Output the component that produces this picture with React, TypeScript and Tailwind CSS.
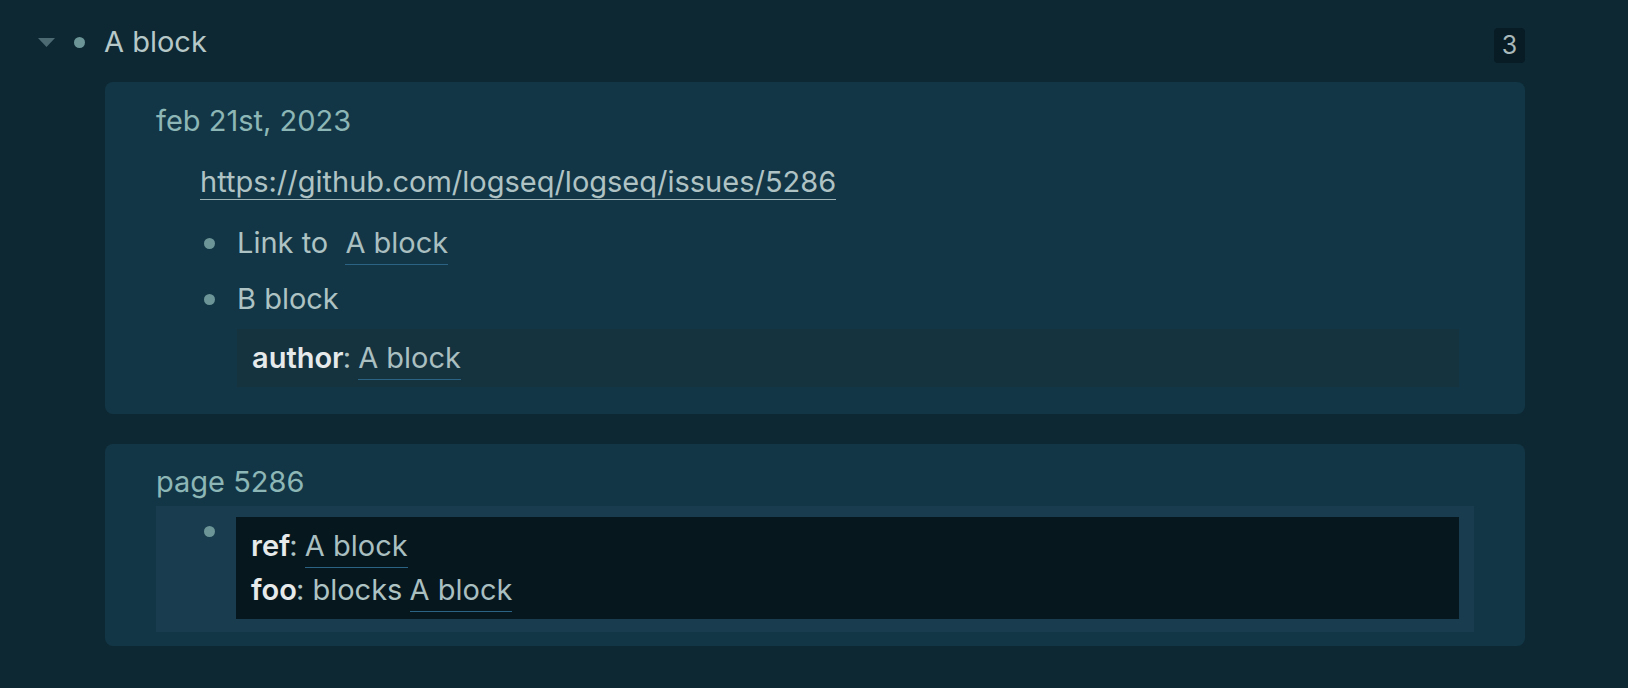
import React from 'react';

const font = { fontFamily: 'Inter, "Noto Sans", sans-serif' };

const Dot = () => <span className="block w-[11px] h-[11px] rounded-full bg-[#6b9597]" />;

const Ref: React.FC<{ children: React.ReactNode }> = ({ children }) => (
  <span className="text-[#a9bfc0] border-b border-[#2b6384] pb-[4px]">{children}</span>
);

export default function App() {
  return (
    <div className="w-[1628px] h-[688px] bg-[#0d2833] text-[29px] leading-[44px] text-[#aec3c3] overflow-hidden" style={font}>
      {/* Top block row */}
      <div className="flex items-center h-[44px] mt-[20px] pr-[103px]">
        <svg width="17" height="9" viewBox="0 0 17 9" className="ml-[38px]">
          <polygon points="0,0 17,0 8.5,9" fill="#4b6a72" />
        </svg>
        <span className="ml-[19px]">
          <Dot />
        </span>
        <span className="ml-[19px] text-[29px] text-[#b7c8c8]">A block</span>
        <span className="ml-auto mt-[6px] w-[31px] h-[35px] rounded-[4px] bg-[#071c24] text-[#a9b8ba] text-[25px] leading-[35px] text-center">
          3
        </span>
      </div>

      {/* Reference card 1 */}
      <div className="ml-[105px] mr-[103px] mt-[18px] rounded-[8px] bg-[#123646] pt-[17px] pb-[27px] pl-[51px] pr-[51px]">
        <div className="text-[#8db6b6]">feb 21st, 2023</div>
        <div className="mt-[17px] pl-[44px]">
          <span className="border-b border-[#9fb4b7] text-[#b0c3c4]">https://github.com/logseq/logseq/issues/5286</span>
        </div>
        <div className="mt-[17px] flex h-[56px] items-start pl-[1px]">
          <div className="w-[80px] flex justify-end pr-[22px] pt-[17px]">
            <Dot />
          </div>
          <div>
            Link to <span className="ml-[9px]"><Ref>A block</Ref></span>
          </div>
        </div>
        <div className="flex items-start pl-[1px]">
          <div className="w-[80px] flex justify-end pr-[22px] pt-[17px]">
            <Dot />
          </div>
          <div>B block</div>
        </div>
        <div className="mt-[8px] ml-[81px] mr-[15px] bg-[#15323f] py-[7px] px-[15px]">
          <span className="font-semibold text-[#e6eaea]">author</span>
          <span className="-ml-[1px]">:</span> <span className="-ml-[1px]"><Ref>A block</Ref></span>
        </div>
      </div>

      {/* Reference card 2 */}
      <div className="ml-[105px] mr-[103px] mt-[30px] rounded-[8px] bg-[#123646] pt-[16px] pb-[14px] px-[51px]">
        <div className="text-[#8db6b6]">page 5286</div>
        <div className="mt-[2px] bg-[#193d4e] pt-[11px] pb-[13px] pr-[15px] flex items-start">
          <div className="w-[80px] flex justify-end pr-[21px] pt-[9px]">
            <Dot />
          </div>
          <div className="flex-1 bg-[#06171e] py-[7px] px-[15px]">
            <div>
              <span className="font-semibold text-[#e6eaea]">ref</span>
              <span className="-ml-[1px]">:</span> <span className="-ml-[1px]"><Ref>A block</Ref></span>
            </div>
            <div>
              <span className="font-semibold text-[#e6eaea]">foo</span>
              <span className="-ml-[1px]">:</span> blocks <span className="-ml-[1px]"><Ref>A block</Ref></span>
            </div>
          </div>
        </div>
      </div>
    </div>
  );
}
